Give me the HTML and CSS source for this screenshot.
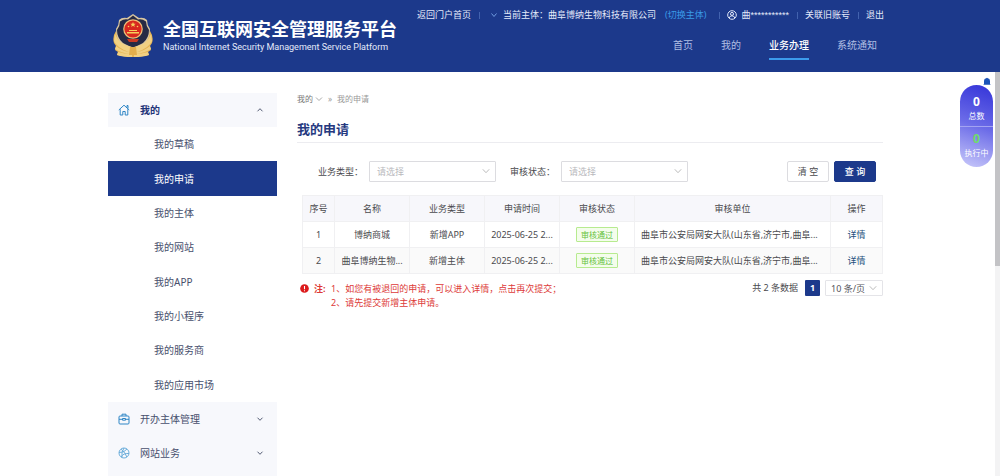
FILE: index.html
```html
<!DOCTYPE html>
<html lang="zh-CN">
<head>
<meta charset="utf-8">
<title>全国互联网安全管理服务平台</title>
<link rel="stylesheet" href="styles.css">
</head>
<body>
<header class="header">
  <div class="brand">
    <svg class="emblem" viewBox="0 0 40 44" aria-hidden="true">
      <path fill="#e6b453" d="M3 17Q-1 23 1 29L3 32L2 36L5 38L4 41Q11 43 20 43Q29 43 36 41L35 38L38 36L37 32L39 29Q41 23 37 17L32 29H8Z"/>
      <path fill="#d9c6a0" d="M20 0L26 4Q31 3 34 6Q34 11 37 15Q37 25 31 31Q26 34 20 36Q14 34 9 31Q3 25 3 15Q6 11 6 6Q9 3 14 4Z"/>
      <path fill="#262a45" d="M20 1.500L25 5.500Q29 4.500 33 7.500Q33 12 36 16Q36 24 30 29L20 34L10 29Q4 24 4 16Q7 12 7 7.500Q11 4.500 15 5.500Z"/>
      <circle cx="20" cy="15" r="9.800" fill="#f0c077"/>
      <circle cx="20" cy="15" r="8.600" fill="#d8281f"/>
      <path fill="#f6cf5b" d="M20 8l.8 1.800h1.900l-1.500 1.200.6 1.900-1.800-1.100-1.800 1.100.6-1.900-1.500-1.200h1.900zM14 18h12v1.500H14zM16 16h8v1h-8z"/>
      <circle cx="15.500" cy="12.500" r=".8" fill="#f6cf5b"/><circle cx="24.500" cy="12.500" r=".8" fill="#f6cf5b"/>
      <path fill="#c93722" d="M14 25h12l-2 3h-8z"/>
      <path fill="#f1d083" d="M2 20Q6 31 19 33V43Q10 43 4 41L5 38Q12 40 17 40Q8 39 2 35L3 32Q9 37 16 38Q4 34 1 27ZM38 20Q34 31 21 33V43Q30 43 36 41L35 38Q28 40 23 40Q32 39 38 35L37 32Q31 37 24 38Q36 34 39 27Z"/>
      <path fill="#e3ae4c" d="M17 33h6l1 8h-8z"/>
    </svg>
    <div class="brand-text">
      <h1 class="brand-name">全国互联网安全管理服务平台</h1>
      <p class="brand-sub">National Internet Security Management Service Platform</p>
    </div>
  </div>
  <div class="header-right">
    <div class="account">
      <a class="account-link" href="#">返回门户首页</a>
      <span class="account-subject">
        <svg class="caret caret-blue" viewBox="0 0 8 8" aria-hidden="true"><path d="M1.500 2.500L4 5.500l2.500-3"/></svg>
        <span>当前主体：曲阜博纳生物科技有限公司</span>
        <a class="switch" href="#">(切换主体)</a>
      </span>
      <span class="account-user">
        <svg class="user-icon" viewBox="0 0 10 10" aria-hidden="true"><circle cx="5" cy="5" r="4.300"/><circle cx="5" cy="3.900" r="1.500"/><path d="M2.200 8Q2.600 5.800 5 5.800T7.800 8"/></svg>
        <span class="user-name">曲***********</span>
      </span>
      <a class="account-link" href="#">关联旧账号</a>
      <a class="account-link" href="#">退出</a>
    </div>
    <nav class="nav">
      <a class="nav-link" href="#">首页</a>
      <a class="nav-link" href="#">我的</a>
      <a class="nav-link nav-active" href="#">业务办理</a>
      <a class="nav-link" href="#">系统通知</a>
    </nav>
  </div>
</header>
<div class="viewport">
  <div class="page">
    <aside class="sidebar">
      <button class="group group-open" type="button">
        <svg class="group-icon" viewBox="0 0 12 12" aria-hidden="true"><path d="M.8 6L6 1.200 11.200 6M2.200 5.200V11h2.600V7.500h2.400V11h2.600V5.200M9 3.500V1.500h1v3"/></svg>
        <span class="group-name">我的</span>
        <svg class="caret" viewBox="0 0 8 8" aria-hidden="true"><path d="M1.500 5.300L4 2.700l2.500 2.600"/></svg>
      </button>
      <nav class="submenu">
        <a class="item" href="#">我的草稿</a>
        <a class="item item-active" href="#">我的申请</a>
        <a class="item" href="#">我的主体</a>
        <a class="item" href="#">我的网站</a>
        <a class="item" href="#">我的APP</a>
        <a class="item" href="#">我的小程序</a>
        <a class="item" href="#">我的服务商</a>
        <a class="item" href="#">我的应用市场</a>
      </nav>
      <button class="group" type="button">
        <svg class="group-icon" viewBox="0 0 12 12" aria-hidden="true"><rect x="1" y="3" width="10" height="8" rx="1"/><path d="M4 3V1.200h4V3M1 6.300h3.500M7.500 6.300H11M4.500 5.500h3v1.700h-3z"/></svg>
        <span class="group-name">开办主体管理</span>
        <svg class="caret" viewBox="0 0 8 8" aria-hidden="true"><path d="M1.500 2.700L4 5.300l2.500-2.600"/></svg>
      </button>
      <button class="group" type="button">
        <svg class="group-icon group-icon-light" viewBox="0 0 12 12" aria-hidden="true"><circle cx="6" cy="6" r="5"/><path d="M3 2.200Q7.500 5 8.800 10M1 5.500Q6 6 9 2M3.200 10Q5 6 11 6.500M6 1Q3 5 4 10.500"/></svg>
        <span class="group-name">网站业务</span>
        <svg class="caret" viewBox="0 0 8 8" aria-hidden="true"><path d="M1.500 2.700L4 5.300l2.500-2.600"/></svg>
      </button>
    </aside>
    <main class="main">
      <div class="crumbs">
        <a class="crumb" href="#">我的</a>
        <svg class="caret caret-grey" viewBox="0 0 8 8" aria-hidden="true"><path d="M1 2.500L4 5.500l3-3"/></svg>
        <span class="crumb-sep">»</span>
        <span class="crumb-here">我的申请</span>
      </div>
      <h2 class="title">我的申请</h2>
      <form class="filters">
        <label class="filter-label" for="type">业务类型：</label>
        <span class="pick">
          <select class="select" id="type"><option>请选择</option></select>
          <svg class="pick-caret" viewBox="0 0 8 8" aria-hidden="true"><path d="M.8 2.300L4 5.700l3.200-3.400"/></svg>
        </span>
        <label class="filter-label" for="state">审核状态：</label>
        <span class="pick">
          <select class="select" id="state"><option>请选择</option></select>
          <svg class="pick-caret" viewBox="0 0 8 8" aria-hidden="true"><path d="M.8 2.300L4 5.700l3.200-3.400"/></svg>
        </span>
        <span class="actions">
          <button class="btn" type="reset">清 空</button>
          <button class="btn btn-primary" type="button">查 询</button>
        </span>
      </form>
      <table class="table">
        <colgroup><col class="c-no"><col class="c-mid"><col class="c-mid"><col class="c-mid"><col class="c-mid"><col><col class="c-op"></colgroup>
        <thead>
          <tr><th>序号</th><th>名称</th><th>业务类型</th><th>申请时间</th><th>审核状态</th><th>审核单位</th><th>操作</th></tr>
        </thead>
        <tbody>
          <tr><td>1</td><td>博纳商城</td><td>新增APP</td><td>2025-06-25 2...</td><td><span class="tag">审核通过</span></td><td class="left">曲阜市公安局网安大队(山东省,济宁市,曲阜...</td><td><a class="detail" href="#">详情</a></td></tr>
          <tr><td>2</td><td>曲阜博纳生物...</td><td>新增主体</td><td>2025-06-25 2...</td><td><span class="tag">审核通过</span></td><td class="left">曲阜市公安局网安大队(山东省,济宁市,曲阜...</td><td><a class="detail" href="#">详情</a></td></tr>
        </tbody>
      </table>
      <div class="foot">
        <div class="note">
          <svg class="note-icon" viewBox="0 0 10 10" aria-hidden="true"><circle cx="5" cy="5" r="4.800" fill="#dc1a1c"/><path d="M5 2.200v3.600M5 6.900v1.100" stroke="#fff" stroke-width="1.200"/></svg>
          <strong class="note-label">注:</strong>
          <div class="note-lines">
            <p class="note-line">1、如您有被退回的申请，可以进入详情，点击再次提交；</p>
            <p class="note-line">2、请先提交新增主体申请。</p>
          </div>
        </div>
        <div class="pager">
          <span>共 2 条数据</span>
          <button class="page-no" type="button">1</button>
          <span class="pick pick-size">
            <select class="select select-size" aria-label="每页条数"><option>10 条/页</option></select>
            <svg class="pick-caret" viewBox="0 0 8 8" aria-hidden="true"><path d="M.8 2.300L4 5.700l3.200-3.400"/></svg>
          </span>
        </div>
      </div>
    </main>
  </div>
  <div class="scrollbar" aria-hidden="true"><div class="thumb"></div></div>
  <div class="counter">
    <svg class="bell" viewBox="0 0 8 9" aria-hidden="true"><path d="M1 7V4Q1 1.500 3.200 1.200 4 .2 4.800 1.200 7 1.500 7 4v3l.8.8H.2z" fill="#1b53b8"/></svg>
    <div class="count"><b class="count-no">0</b><span>总数</span></div>
    <div class="count"><b class="count-no count-green">0</b><span>执行中</span></div>
  </div>
</div>
</body>
</html>
```
FILE: styles.css
```css
* { box-sizing: border-box; }
body {
  margin: 0;
  height: 100vh;
  overflow: hidden;
  display: flex;
  flex-direction: column;
  background: #fff;
  color: #4a4a4e;
  font: 9px/14px "Noto Sans", "Noto Sans CJK SC", sans-serif;
}
h1, h2, p { margin: 0; }
a { color: inherit; text-decoration: none; }
button, select { font: inherit; color: inherit; margin: 0; }
svg { flex: none; fill: none; }

.header {
  flex: none;
  display: flex;
  justify-content: space-between;
  height: 72px;
  padding: 0 116px 0 113px;
  background: #1c398b;
  color: #e4eafa;
}
.brand { display: flex; align-items: center; gap: 10px; }
.emblem { width: 40px; height: 44px; }
.brand-name { font-size: 18px; line-height: 22px; font-weight: 700; color: #fff; white-space: nowrap; }
.brand-sub { font-family: Roboto, sans-serif; font-size: 9px; line-height: 14px; color: #e4eafa; white-space: nowrap; }
.header-right { display: flex; flex-direction: column; align-items: flex-end; padding-top: 8px; }
.account { display: flex; white-space: nowrap; }
.account > * + * { margin-left: 8px; padding-left: 8px; position: relative; }
.account > * + *::before { content: ""; position: absolute; left: 0; top: 4px; height: 7px; border-left: 1px solid #4262ae; }
.account-subject, .account-user { display: flex; align-items: center; gap: 4px; }
.account .account-subject { gap: 5px; padding-left: 11px; }
.account .account-user { margin-left: 13px; }
.user-name { font-family: "Liberation Sans", "Noto Sans CJK SC", sans-serif; }
.switch { margin-left: 4px; color: #3a9be8; }
.caret { width: 8px; height: 8px; stroke: #555d75; }
.caret-blue { stroke: #6f9be0; }
.caret-grey { stroke: #aaa; stroke-width: 1; }
.user-icon { width: 10px; height: 10px; stroke: #e4eafa; }
.nav { display: flex; gap: 28px; padding: 14px 7px 0 0; font-size: 10px; line-height: 18px; }
.nav-link { height: 24px; color: #b0bfe3; }
.nav-active { color: #fff; font-weight: 500; border-bottom: 2px solid #3c9bec; }

.viewport { flex: 1; min-height: 0; display: flex; position: relative; }
.page { flex: 1; min-width: 0; display: flex; gap: 20px; padding: 21px 112px 0 108px; overflow: hidden; }
.sidebar { flex: none; width: 169px; background: #f7f8fc; font-size: 10px; color: #474f6d; }
.group {
  display: flex;
  align-items: center;
  width: 100%;
  height: 34px;
  padding: 0 13px 0 10px;
  border: 0;
  background: #f7f8fc;
  text-align: left;
}
.group-icon { width: 12px; height: 12px; margin-right: 10px; stroke: #2f86c6; }
.group-icon-light { stroke: #6caedb; }
.group-name { flex: 1; }
.group-open { font-weight: 700; color: #1f3478; }
.submenu { display: grid; grid-auto-rows: 1fr; min-height: 275px; background: #fff; }
.item { display: flex; align-items: center; padding-left: 46px; }
.item-active { background: #1c398b; color: #fff; }

.main { flex: 1; min-width: 0; }
.crumbs { display: flex; align-items: center; gap: 2px; height: 12px; font-size: 8px; color: #777; }
.crumb-sep { margin: 0 3px; color: #999; }
.crumb-here { color: #999; }
.title { margin-top: 14px; padding-bottom: 3px; border-bottom: 1px solid #ececf0; font-size: 13px; line-height: 20px; color: #25397f; }
.filters { display: flex; align-items: center; padding: 18px 7px 13px 21px; }
.filter-label { width: 51px; white-space: nowrap; }
.pick { position: relative; display: flex; width: 127px; margin-right: 14px; }
.pick-caret { position: absolute; right: 6px; top: 6px; width: 8px; height: 8px; stroke: #bbb; pointer-events: none; }
.select {
  appearance: none;
  width: 100%;
  height: 21px;
  padding: 0 7px;
  border: 1px solid #dcdce0;
  border-radius: 1px;
  background: #fff;
  color: #b9b9bd;
}
.actions { display: flex; gap: 5px; margin-left: auto; }
.btn { width: 42px; height: 21px; padding: 0; border: 1px solid #dcdce0; border-radius: 2px; background: #fff; }
.btn-primary { border-color: #1c398b; background: #1c398b; color: #fff; font-weight: 500; }

.table { width: calc(100% - 5px); margin-left: 5px; table-layout: fixed; border-collapse: collapse; text-align: center; }
.c-no { width: 32px; }
.c-mid { width: 75px; }
.c-op { width: 52px; }
.table th, .table td { height: 26px; padding: 0 6px; border: 1px solid #f0f0f2; font-weight: 400; white-space: nowrap; }
.table th { background: #f7f7fb; }
.table tr:nth-child(2) td { background: #fafafa; }
.table .left { text-align: left; }
.tag { display: inline-block; padding: 0 4px; border: 1px solid #b7eb8f; border-radius: 1px; background: #f4fdec; color: #64c13b; font-size: 8px; line-height: 13px; }
.detail { color: #24507c; }

.foot { display: flex; justify-content: space-between; padding: 6px 0 0 3px; }
.note { display: flex; align-items: flex-start; color: #dd3a38; }
.note-icon { width: 9px; height: 9px; margin: 4px 5px 0 0; }
.note-label { width: 17px; line-height: 18px; }
.note-line { line-height: 14px; white-space: nowrap; }
.note-lines { padding-top: 2px; }
.pager { display: flex; align-items: flex-start; line-height: 16px; }
.page-no { width: 15px; height: 16px; margin: 0 5px 0 7px; padding: 0; border: 0; border-radius: 1px; background: #1c398b; color: #fff; font-weight: 700; }
.pick-size { width: 58px; margin: 0; }
.select-size { height: 16px; padding: 0 5px; color: #55555a; border-color: #e4e4e8; }
.pick-size .pick-caret { top: 4px; }

.scrollbar { flex: none; width: 5px; background: #f3f3f4; }
.thumb { height: 48%; background: #c3c3c6; }
.counter {
  position: absolute;
  top: 13px;
  right: 7px;
  width: 33px;
  border-radius: 17px;
  background: linear-gradient(200deg, #3333d8 0%, #6c6ce8 50%, #c9c9fa 100%);
  color: #fff;
  text-align: center;
  font-size: 8px;
  line-height: 12px;
}
.bell { position: absolute; right: 2px; top: -8px; width: 8px; height: 9px; }
.count { display: flex; flex-direction: column; align-items: center; height: 41px; padding-top: 8px; white-space: nowrap; }
.count + .count { border-top: 1px solid #a3a3f2; padding-top: 3px; }
.count-no { font-size: 12px; line-height: 17px; }
.count-green { color: #6fdc6a; }
```
